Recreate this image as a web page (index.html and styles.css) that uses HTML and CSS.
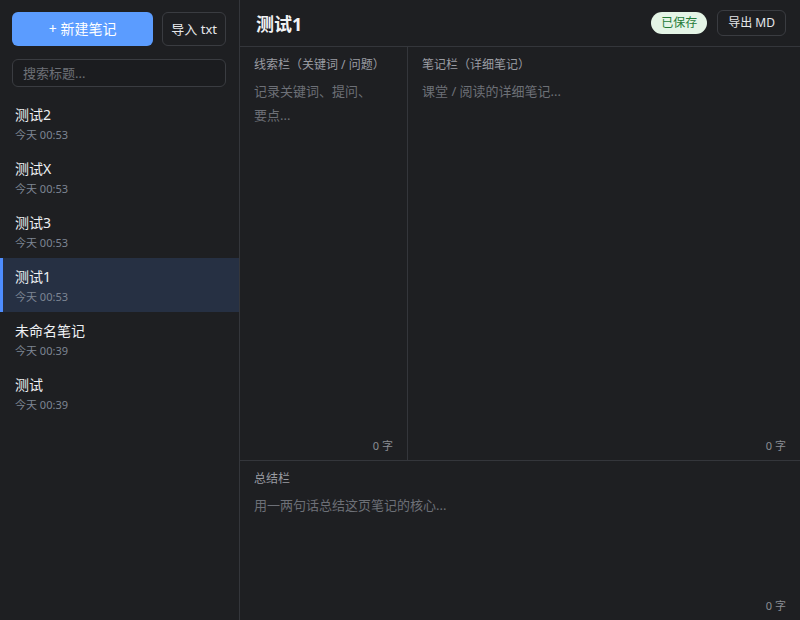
FILE: index.html
```html
<!DOCTYPE html>
<html lang="zh-CN">
<head>
    <meta charset="UTF-8">
    <meta name="viewport" content="width=device-width, initial-scale=1.0">
    <title>康奈尔笔记</title>
    <link rel="stylesheet" href="styles.css">
</head>
<body>
    <div class="app">
        <aside class="sidebar">
            <div class="side-top">
                <div class="actions">
                    <button class="btn-new">+ 新建笔记</button>
                    <button class="btn-ghost">导入 txt</button>
                </div>
                <input class="search" type="text" placeholder="搜索标题...">
            </div>
            <ul class="note-list">
                <li class="note-item"><div class="note-title">测试2</div><div class="note-time">今天 00:53</div></li>
                <li class="note-item"><div class="note-title">测试X</div><div class="note-time">今天 00:53</div></li>
                <li class="note-item"><div class="note-title">测试3</div><div class="note-time">今天 00:53</div></li>
                <li class="note-item active"><div class="note-title">测试1</div><div class="note-time">今天 00:53</div></li>
                <li class="note-item"><div class="note-title">未命名笔记</div><div class="note-time">今天 00:39</div></li>
                <li class="note-item"><div class="note-title">测试</div><div class="note-time">今天 00:39</div></li>
            </ul>
        </aside>

        <main class="editor">
            <header class="editor-head">
                <h1 class="doc-title">测试1</h1>
                <span class="badge">已保存</span>
                <button class="btn-ghost btn-small">导出 MD</button>
            </header>

            <div class="cornell">
                <section class="pane pane-cue">
                    <div class="pane-label">线索栏（关键词 / 问题）</div>
                    <textarea class="pane-text" placeholder="记录关键词、提问、要点..."></textarea>
                    <div class="count">0 字</div>
                </section>
                <section class="pane pane-notes">
                    <div class="pane-label">笔记栏（详细笔记）</div>
                    <textarea class="pane-text" placeholder="课堂 / 阅读的详细笔记..."></textarea>
                    <div class="count">0 字</div>
                </section>
            </div>

            <section class="pane pane-summary">
                <div class="pane-label">总结栏</div>
                <textarea class="pane-text" placeholder="用一两句话总结这页笔记的核心..."></textarea>
                <div class="count">0 字</div>
            </section>
        </main>
    </div>
</body>
</html>
```

FILE: styles.css
```css
* {
    box-sizing: border-box;
}

body {
    margin: 0;
    background-color: #1e1f22;
    color: #e6e7ea;
    font-family: "Noto Sans", "Noto Sans CJK SC", sans-serif;
    font-size: 14px;
    overflow: hidden;
}

.app {
    display: flex;
    height: 100vh;
}

/* 侧边栏 */
.sidebar {
    width: 240px;
    flex-shrink: 0;
    border-right: 1px solid #34363b;
    display: flex;
    flex-direction: column;
}

.side-top {
    padding: 12px 13px 9px 12px;
    display: flex;
    flex-direction: column;
    gap: 13px;
}

.actions {
    display: flex;
    gap: 9px;
}

button {
    font-family: inherit;
    cursor: pointer;
}

.btn-new {
    flex: 1;
    height: 34px;
    border: none;
    border-radius: 6px;
    background-color: #5b9cff;
    color: #fff;
    font-size: 14px;
    line-height: 1;
}

.btn-ghost {
    height: 34px;
    padding: 0 8px;
    border: 1px solid #3a3c41;
    border-radius: 6px;
    background-color: transparent;
    color: #e6e7ea;
    font-size: 13px;
    line-height: 1;
}

.search {
    height: 28px;
    padding: 0 10px;
    border: 1px solid #3a3c41;
    border-radius: 6px;
    background-color: #1b1c1f;
    color: #e6e7ea;
    font-family: inherit;
    font-size: 13px;
    outline: none;
}

.search::placeholder {
    color: #6d7077;
}

.note-list {
    list-style: none;
    margin: 0;
    padding: 0;
}

.note-item {
    height: 54px;
    padding: 9px 15px 0 12px;
    border-left: 3px solid transparent;
    cursor: pointer;
}

.note-item.active {
    background-color: #263043;
    border-left-color: #4e8dff;
}

.note-title {
    font-size: 14px;
    line-height: 20px;
    color: #eef0f3;
}

.note-time {
    font-size: 11px;
    line-height: 16px;
    margin-top: 2px;
    color: #7d8593;
}

/* 编辑区 */
.editor {
    flex: 1;
    display: flex;
    flex-direction: column;
    min-width: 0;
}

.editor-head {
    height: 47px;
    padding: 0 14px 0 16px;
    border-bottom: 1px solid #34363b;
    display: flex;
    align-items: center;
    gap: 10px;
}

.doc-title {
    flex: 1;
    margin: 0;
    font-size: 18px;
    font-weight: bold;
    color: #f2f3f5;
}

.badge {
    height: 22px;
    padding: 0 10px;
    border-radius: 11px;
    background-color: #e4f4e6;
    color: #237a37;
    font-size: 12px;
    line-height: 22px;
}

.btn-small {
    height: 26px;
    padding: 0 10px;
    font-size: 12px;
}

.cornell {
    flex: 1;
    display: flex;
    border-bottom: 1px solid #34363b;
    min-height: 0;
}

.pane {
    display: flex;
    flex-direction: column;
    padding: 9px 14px 6px;
}

.pane-cue {
    width: 30%;
    border-right: 1px solid #34363b;
}

.pane-notes {
    flex: 1;
}

.pane-summary {
    height: 159px;
}

.pane-label {
    font-size: 12px;
    line-height: 18px;
    color: #9a9ca2;
}

.pane-text {
    flex: 1;
    margin-top: 5px;
    padding: 0 12px 0 0;
    border: none;
    outline: none;
    resize: none;
    background: transparent;
    color: #e6e7ea;
    font-family: inherit;
    font-size: 13px;
    line-height: 24px;
}

.pane-text::placeholder {
    color: #6d7077;
}

.count {
    text-align: right;
    font-size: 11px;
    line-height: 16px;
    color: #8a8d93;
}
```
